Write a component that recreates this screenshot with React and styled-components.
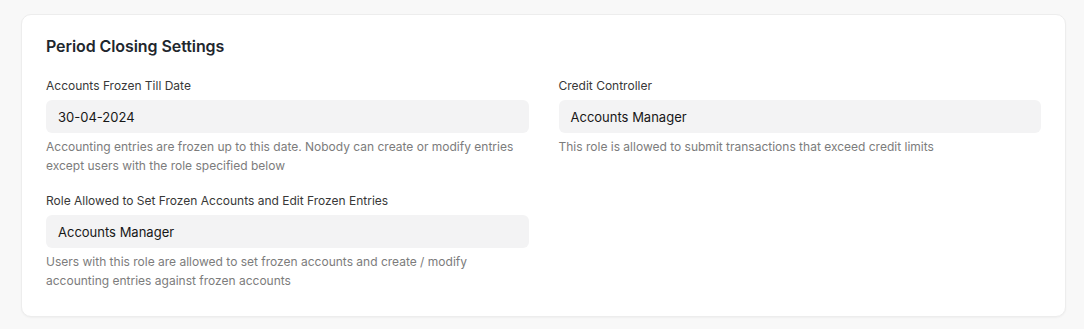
import React from 'react';
import styled, { createGlobalStyle } from 'styled-components';

const GlobalStyle = createGlobalStyle`
  html, body {
    margin: 0;
    padding: 0;
    background: #f8f8f8;
    font-family: Inter, "Noto Sans", sans-serif;
    -webkit-font-smoothing: antialiased;
  }
`;

const Page = styled.div`
  padding: 14px 18px 12px 21px;
`;

const Card = styled.section`
  background: #ffffff;
  border: 1px solid #ededed;
  border-radius: 10px;
  box-shadow: 0 1px 2px rgba(0, 0, 0, 0.04);
  padding: 19px 24px 26px;
`;

const Title = styled.h2`
  margin: 0 0 20px;
  font-size: 16px;
  line-height: 24px;
  font-weight: 600;
  color: #1f272e;
  letter-spacing: -0.005em;
`;

const Columns = styled.div`
  display: grid;
  grid-template-columns: 1fr 1fr;
  column-gap: 30px;
  align-items: start;
`;

const Column = styled.div`
  display: flex;
  flex-direction: column;
  gap: 18px;
`;

const Field = styled.div`
  display: flex;
  flex-direction: column;
`;

const Label = styled.label`
  font-size: 12px;
  line-height: 16px;
  color: #383838;
  margin-bottom: 6px;
`;

const Input = styled.div`
  height: 33px;
  display: flex;
  align-items: center;
  padding: 0 12px;
  background: #f3f3f4;
  border-radius: 6px;
  font-size: 13px;
  color: #171717;
`;

const Description = styled.p`
  margin: 4px 0 0;
  font-size: 12px;
  line-height: 19px;
  color: #7c7c7c;
`;

const fields = {
  left: [
    {
      label: 'Accounts Frozen Till Date',
      value: '30-04-2024',
      description:
        'Accounting entries are frozen up to this date. Nobody can create or modify entries except users with the role specified below',
    },
    {
      label: 'Role Allowed to Set Frozen Accounts and Edit Frozen Entries',
      value: 'Accounts Manager',
      description:
        'Users with this role are allowed to set frozen accounts and create / modify accounting entries against frozen accounts',
    },
  ],
  right: [
    {
      label: 'Credit Controller',
      value: 'Accounts Manager',
      description: 'This role is allowed to submit transactions that exceed credit limits',
    },
  ],
};

const FormField = ({ label, value, description }) => (
  <Field>
    <Label>{label}</Label>
    <Input>{value}</Input>
    <Description>{description}</Description>
  </Field>
);

export default function App() {
  return (
    <>
      <GlobalStyle />
      <Page>
        <Card>
          <Title>Period Closing Settings</Title>
          <Columns>
            <Column>
              {fields.left.map((f) => (
                <FormField key={f.label} {...f} />
              ))}
            </Column>
            <Column>
              {fields.right.map((f) => (
                <FormField key={f.label} {...f} />
              ))}
            </Column>
          </Columns>
        </Card>
      </Page>
    </>
  );
}
